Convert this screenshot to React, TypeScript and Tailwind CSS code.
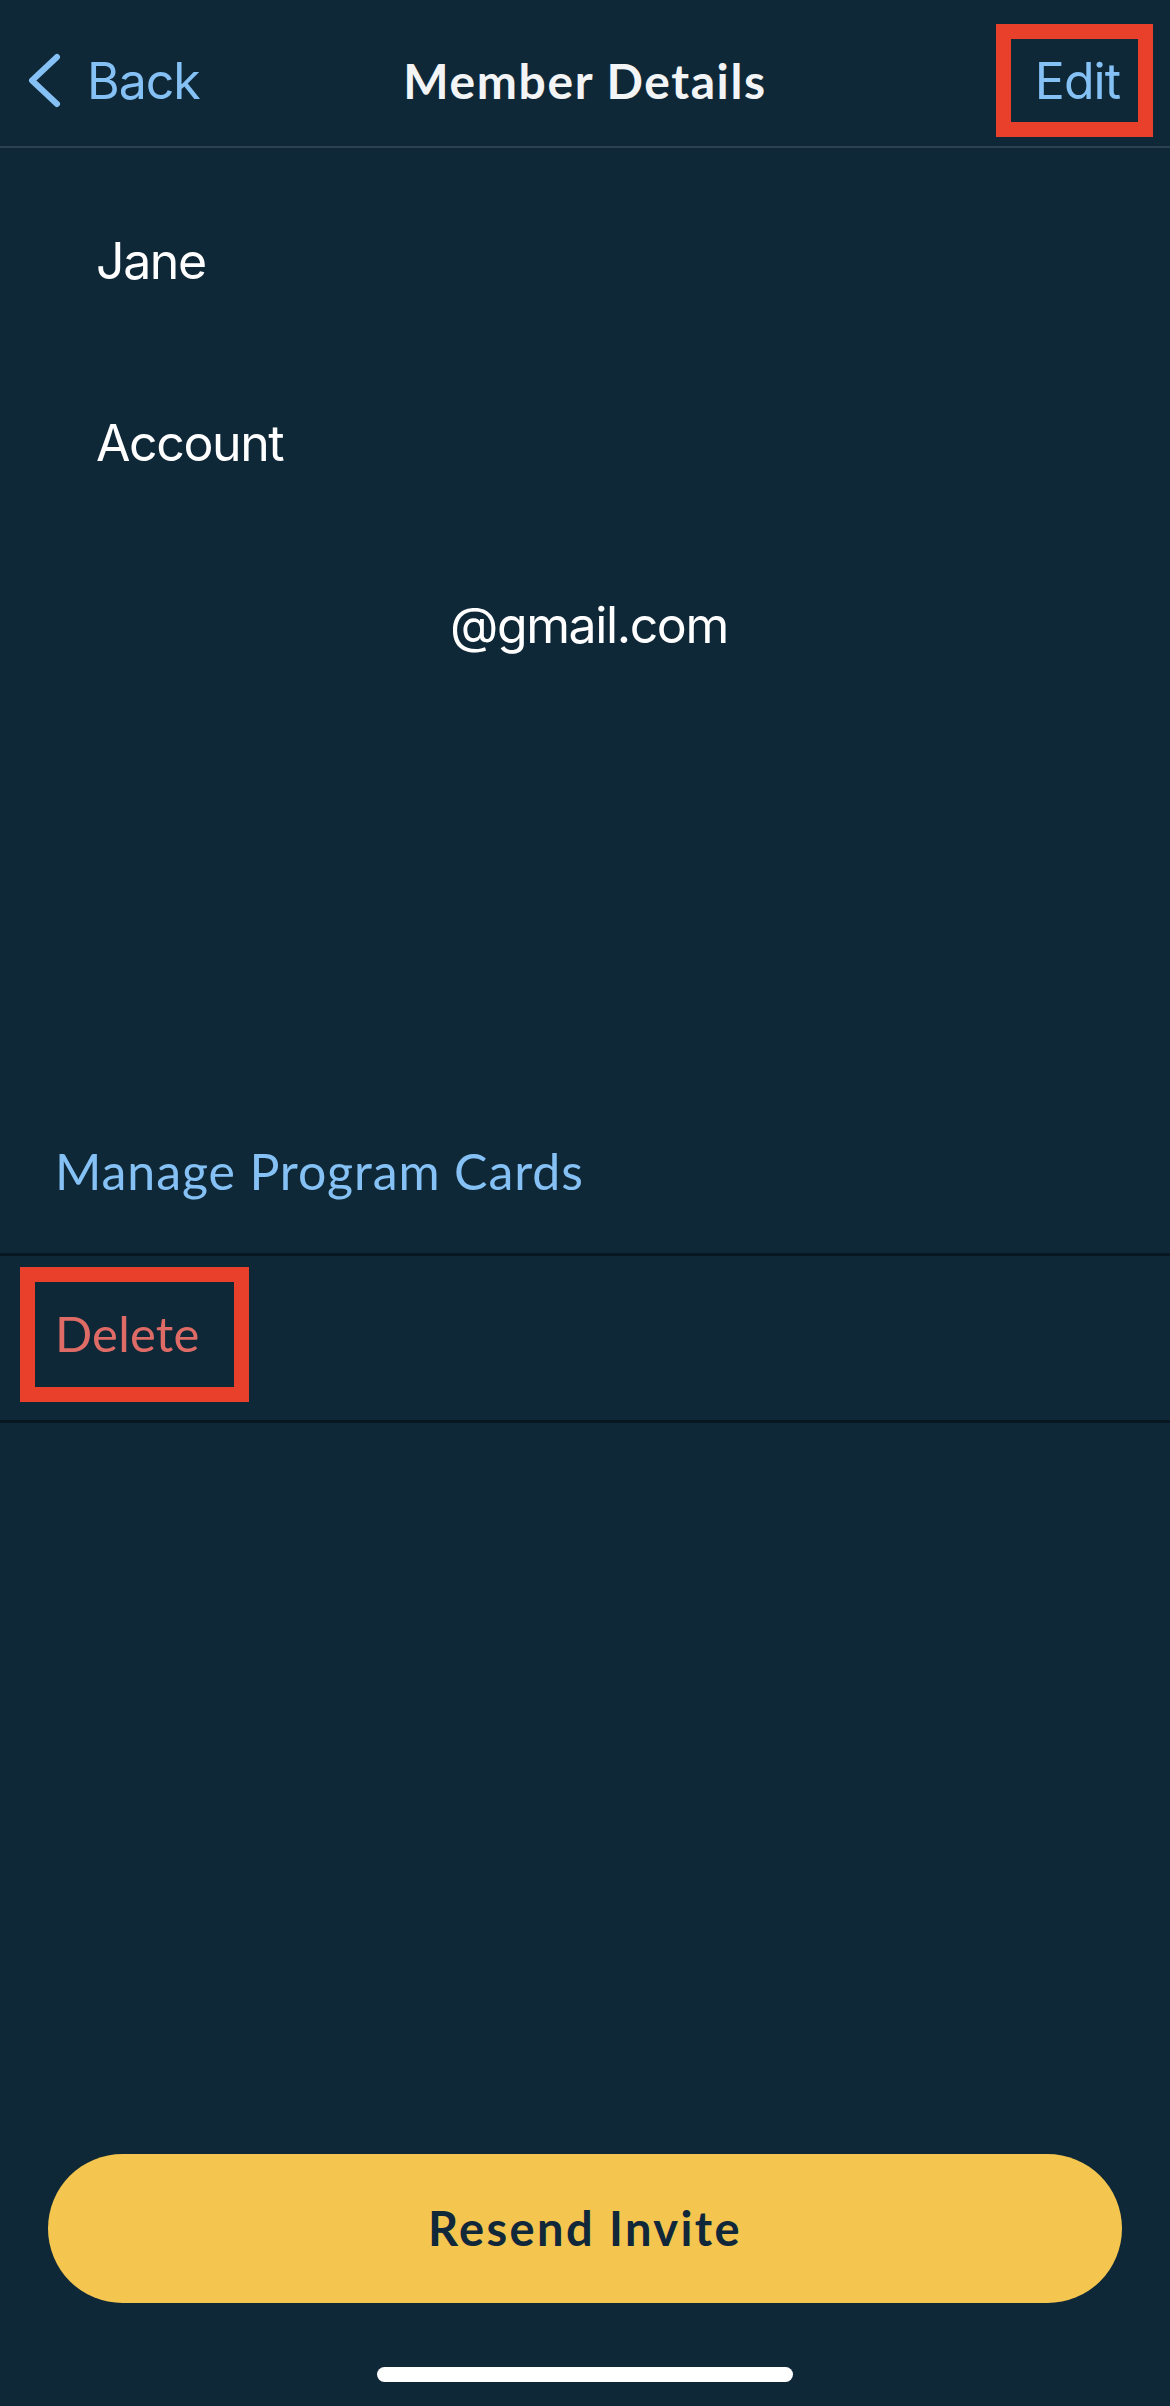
import { ReactNode } from 'react';

// annotation frame drawn on top of the screenshot
function Highlight({ className }: { className: string }) {
  return <div className={`pointer-events-none absolute border-[15px] border-[#e8402a] ${className}`} />;
}

function Field({ children, className = '' }: { children: ReactNode; className?: string }) {
  return (
    <div className={`h-[60px] text-[50px] leading-[60px] tracking-[-1.4px] text-white ${className}`}>
      {children}
    </div>
  );
}

export default function App() {
  return (
    <div className="flex h-[2406px] w-[1170px] flex-col bg-[#0f2838] font-['Inter',sans-serif]">
      {/* Nav bar */}
      <header className="relative grid h-[148px] grid-cols-[1fr_auto_1fr] items-start border-b-2 border-[#2b4351] pt-[51px]">
        <button className="flex items-start pl-[28px] text-[#85c1f5]">
          <svg width="33" height="55" viewBox="0 0 33 55" className="mt-[2px]" fill="none">
            <polyline
              points="29,4 4,27.5 29,51"
              stroke="#85c1f5"
              strokeWidth="6"
              strokeLinecap="round"
              strokeLinejoin="round"
            />
          </svg>
          <span className="ml-[26px] text-[50px] leading-[60px] tracking-[-1px]">Back</span>
        </button>
        <h1 className="font-['Lato',sans-serif] text-[48px] font-bold leading-[60px] tracking-[1.6px] text-[#f2f4f5]">
          Member Details
        </h1>
        <div className="flex justify-end pr-[50px]">
          <button className="text-[50px] leading-[60px] tracking-[-1px] text-[#85c1f5]">Edit</button>
        </div>
        <Highlight className="left-[996px] top-[24px] h-[113px] w-[157px]" />
      </header>

      {/* Member info */}
      <div className="mt-[83px] flex flex-col gap-[122px]">
        <Field className="pl-[96px]">Jane</Field>
        <Field className="pl-[96px]">Account</Field>
        <Field className="pl-[450px]">@gmail.com</Field>
      </div>

      {/* Actions */}
      <div className="mt-[434px] font-['Lato',sans-serif]">
        <div className="flex h-[164px] items-center pl-[55px]">
          <span className="text-[50px] leading-[60px] tracking-[0.9px] text-[#85c1f5]">Manage Program Cards</span>
        </div>
        <div className="h-[3px] bg-[#081822]" />
        <div className="relative flex h-[164px] items-center pl-[55px]">
          <span className="mb-[10px] text-[49px] leading-[60px] tracking-[0.2px] text-[#df6b66]">Delete</span>
          <Highlight className="left-[20px] top-[11px] h-[135px] w-[229px]" />
        </div>
        <div className="h-[3px] bg-[#081822]" />
      </div>

      <div className="flex-1" />

      {/* Bottom button */}
      <div className="px-[48px]">
        <button className="flex h-[149px] w-full items-center justify-center rounded-full bg-[#f4c54f] font-['Lato',sans-serif] text-[47px] font-bold tracking-[2.4px] text-[#10283a]">
          Resend Invite
        </button>
      </div>
      <div className="mb-[24px] mt-[64px] flex justify-center">
        <div className="h-[15px] w-[416px] rounded-full bg-white" />
      </div>
    </div>
  );
}
